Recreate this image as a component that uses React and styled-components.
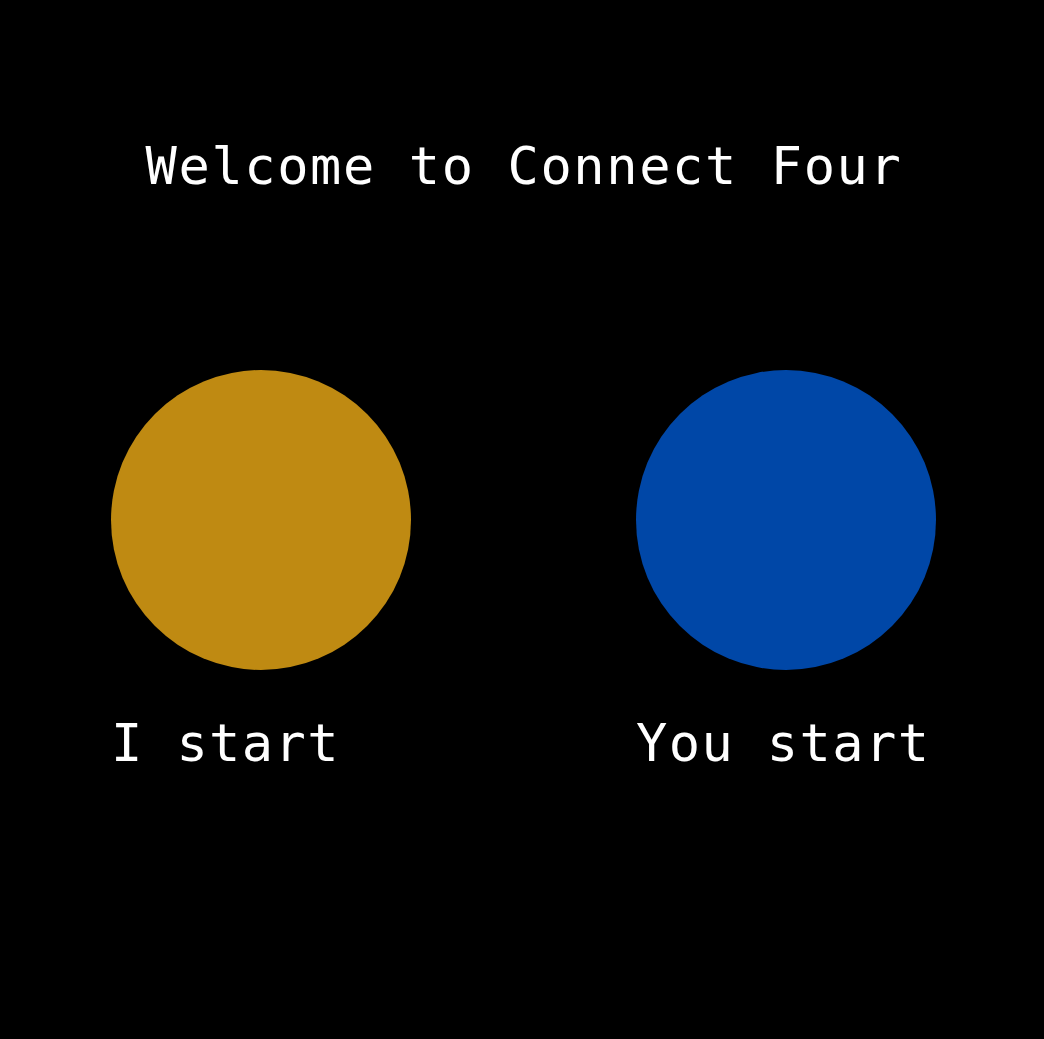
import React from 'react';
import styled, { createGlobalStyle } from 'styled-components';

const GlobalStyle = createGlobalStyle`
  html, body {
    margin: 0;
    padding: 0;
    background: #000;
  }
`;

const players = [
  { id: 'me', label: 'I start', color: '#bf8a12' },
  { id: 'you', label: 'You start', color: '#0047a7' },
];

const App = () => (
  <Page>
    <GlobalStyle />
    <Title>Welcome to Connect Four</Title>
    <Choices>
      {players.map((p) => (
        <Choice key={p.id}>
          <Disc $color={p.color} />
          <Label>{p.label}</Label>
        </Choice>
      ))}
    </Choices>
  </Page>
);

const Page = styled.main`
  background: #000;
  color: #fff;
  min-height: 100vh;
  padding-top: 136px;
  box-sizing: border-box;
  font-family: "DejaVu Sans Mono", "Liberation Mono", monospace;
`;
const Title = styled.h1`
  margin: 0 0 0 4px;
  font-size: 52px;
  font-weight: 400;
  line-height: 60px;
  letter-spacing: 1.6px;
  text-align: center;
`;
const Choices = styled.section`
  display: flex;
  gap: 225px;
  padding-left: 111px;
  margin-top: 174px;
`;
const Choice = styled.button`
  display: flex;
  flex-direction: column;
  align-items: flex-start;
  gap: 43px;
  background: none;
  border: 0;
  padding: 0;
  color: inherit;
  font: inherit;
  cursor: pointer;
`;
const Disc = styled.div`
  width: 300px;
  height: 300px;
  border-radius: 50%;
  background: ${(p) => p.$color};
`;
const Label = styled.span`
  font-size: 52px;
  line-height: 60px;
  letter-spacing: 1.4px;
  white-space: nowrap;
`;

export default App;
